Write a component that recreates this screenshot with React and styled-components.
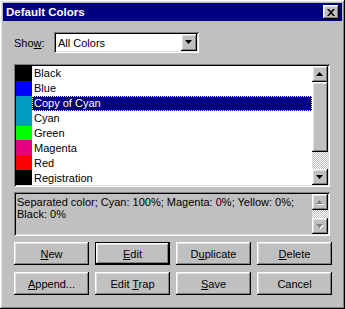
import React from 'react';
import styled, { createGlobalStyle } from 'styled-components';

const GlobalStyle = createGlobalStyle`
  html, body {
    margin: 0;
    padding: 0;
    background: #c0c0c0;
  }
  body {
    font-family: 'Liberation Sans', Arial, sans-serif;
    font-size: 11px;
    color: #000;
  }
`;

const raised = `
  box-shadow: inset -1px -1px #000, inset 1px 1px #fff,
    inset -2px -2px #808080, inset 2px 2px #dfdfdf;
`;

const sunken = `
  box-shadow: inset 1px 1px #808080, inset -1px -1px #fff,
    inset 2px 2px #000, inset -2px -2px #dfdfdf;
`;

const checker = `
  background-color: #fff;
  background-image: repeating-conic-gradient(#c0c0c0 0 25%, #fff 0 50%);
  background-size: 2px 2px;
`;

const Window = styled.div`
  width: 345px;
  height: 309px;
  box-sizing: border-box;
  padding: 3px;
  background: #c0c0c0;
  ${raised}
  display: flex;
  flex-direction: column;
`;

const TitleBar = styled.div`
  height: 18px;
  background: #000080;
  display: flex;
  align-items: center;
  justify-content: space-between;
  padding: 0 3px 0 3px;
  color: #fff;
  font-weight: bold;
  font-size: 11.5px;
`;

const CloseButton = styled.div`
  width: 16px;
  height: 14px;
  box-sizing: border-box;
  background: #c0c0c0;
  ${raised}
  display: flex;
  align-items: center;
  justify-content: center;
`;

const Body = styled.div`
  padding: 11px 0 0 11px;
  display: flex;
  flex-direction: column;
`;

const ShowRow = styled.div`
  display: flex;
  align-items: center;
  height: 21px;
`;

const Label = styled.span`
  width: 40px;
  padding-left: 0;
`;

const Select = styled.div`
  width: 145px;
  height: 21px;
  box-sizing: border-box;
  background: #fff;
  ${sunken}
  display: flex;
  align-items: center;
  justify-content: space-between;
  padding: 2px 2px 2px 4px;
`;

const DropButton = styled.div`
  width: 16px;
  height: 17px;
  box-sizing: border-box;
  background: #c0c0c0;
  ${raised}
  display: flex;
  align-items: center;
  justify-content: center;
`;

const ListBox = styled.div`
  margin-top: 11px;
  width: 316px;
  height: 123px;
  box-sizing: border-box;
  padding: 2px;
  background: #fff;
  ${sunken}
  display: flex;
`;

const Items = styled.div`
  flex: 1;
  display: flex;
  flex-direction: column;
`;

const Item = styled.div`
  height: 15px;
  display: flex;
  align-items: stretch;
`;

const Swatch = styled.div`
  width: 16px;
  background: ${(p) => p.$color};
`;

const ItemText = styled.div`
  flex: 1;
  display: flex;
  align-items: center;
  padding-left: 2px;
  background: ${(p) => (p.$selected ? '#000080' : 'transparent')};
  color: ${(p) => (p.$selected ? '#fff' : '#000')};
  outline: ${(p) => (p.$selected ? '1px dotted #ffff80' : 'none')};
  outline-offset: -1px;
`;

const ScrollBar = styled.div`
  width: 16px;
  display: flex;
  flex-direction: column;
  ${checker}
`;

const ScrollButton = styled.div`
  width: 16px;
  height: 16px;
  box-sizing: border-box;
  background: #c0c0c0;
  ${raised}
  display: flex;
  align-items: center;
  justify-content: center;
  flex-shrink: 0;
`;

const Thumb = styled.div`
  height: ${(p) => p.$h}px;
  box-sizing: border-box;
  background: #c0c0c0;
  ${raised}
`;

const Track = styled.div`
  flex: 1;
`;

const InfoBox = styled.div`
  margin-top: 5px;
  width: 316px;
  height: 44px;
  box-sizing: border-box;
  padding: 2px;
  background: #c0c0c0;
  ${sunken}
  display: flex;
`;

const InfoText = styled.div`
  flex: 1;
  padding: 2px 0 0 1px;
  line-height: 12px;
`;

const Buttons = styled.div`
  margin-top: 6px;
  display: grid;
  grid-template-columns: repeat(4, 75px);
  grid-auto-rows: 23px;
  column-gap: 6px;
  row-gap: 7px;
`;

const Button = styled.div`
  box-sizing: border-box;
  background: #c0c0c0;
  display: flex;
  align-items: center;
  justify-content: center;
  ${(p) => (p.$default
    ? `border: 1px solid #000; ${raised}`
    : raised)}
`;

const Key = styled.span`
  text-decoration: underline;
`;

const Arrow = ({ dir = 'down', color = '#000', shadow }) => {
  const pts = dir === 'down' ? '0,0 7,0 3.5,4' : '3.5,0 7,4 0,4';
  return (
    <svg width="8" height="5" viewBox="0 0 8 5" style={{ overflow: 'visible' }}>
      {shadow && <polygon points={pts} fill="#fff" transform="translate(1,1)" />}
      <polygon points={pts} fill={color} />
    </svg>
  );
};

const colors = [
  ['Black', '#000000'],
  ['Blue', '#0000ff'],
  ['Copy of Cyan', '#009cbf'],
  ['Cyan', '#009cbf'],
  ['Green', '#00ff00'],
  ['Magenta', '#e6007e'],
  ['Red', '#ff0000'],
  ['Registration', '#000000'],
];

export default function App() {
  return (
    <>
      <GlobalStyle />
      <Window>
        <TitleBar>
          <span>Default Colors</span>
          <CloseButton>
            <svg width="8" height="7" viewBox="0 0 8 7">
              <path d="M0 0h2l2 2.3L6 0h2L5 3.5 8 7H6L4 4.7 2 7H0l3-3.5z" fill="#000" />
            </svg>
          </CloseButton>
        </TitleBar>
        <Body>
          <ShowRow>
            <Label>Sho<Key>w</Key>:</Label>
            <Select>
              <span>All Colors</span>
              <DropButton>
                <Arrow />
              </DropButton>
            </Select>
          </ShowRow>
          <ListBox>
            <Items>
              {colors.map(([name, c]) => (
                <Item key={name}>
                  <Swatch $color={c} />
                  <ItemText $selected={name === 'Copy of Cyan'}>{name}</ItemText>
                </Item>
              ))}
            </Items>
            <ScrollBar>
              <ScrollButton><Arrow dir="up" /></ScrollButton>
              <Thumb $h={70} />
              <Track />
              <ScrollButton><Arrow /></ScrollButton>
            </ScrollBar>
          </ListBox>
          <InfoBox>
            <InfoText>
              Separated color; Cyan: 100%; Magenta: 0%; Yellow: 0%; Black: 0%
            </InfoText>
            <ScrollBar>
              <ScrollButton><Arrow dir="up" color="#808080" shadow /></ScrollButton>
              <Track />
              <ScrollButton><Arrow color="#808080" shadow /></ScrollButton>
            </ScrollBar>
          </InfoBox>
          <Buttons>
            <Button><span><Key>N</Key>ew</span></Button>
            <Button $default><span><Key>E</Key>dit</span></Button>
            <Button><span>D<Key>u</Key>plicate</span></Button>
            <Button><span><Key>D</Key>elete</span></Button>
            <Button><span><Key>A</Key>ppend...</span></Button>
            <Button><span>Edit <Key>T</Key>rap</span></Button>
            <Button><span><Key>S</Key>ave</span></Button>
            <Button><span>Cancel</span></Button>
          </Buttons>
        </Body>
      </Window>
    </>
  );
}
